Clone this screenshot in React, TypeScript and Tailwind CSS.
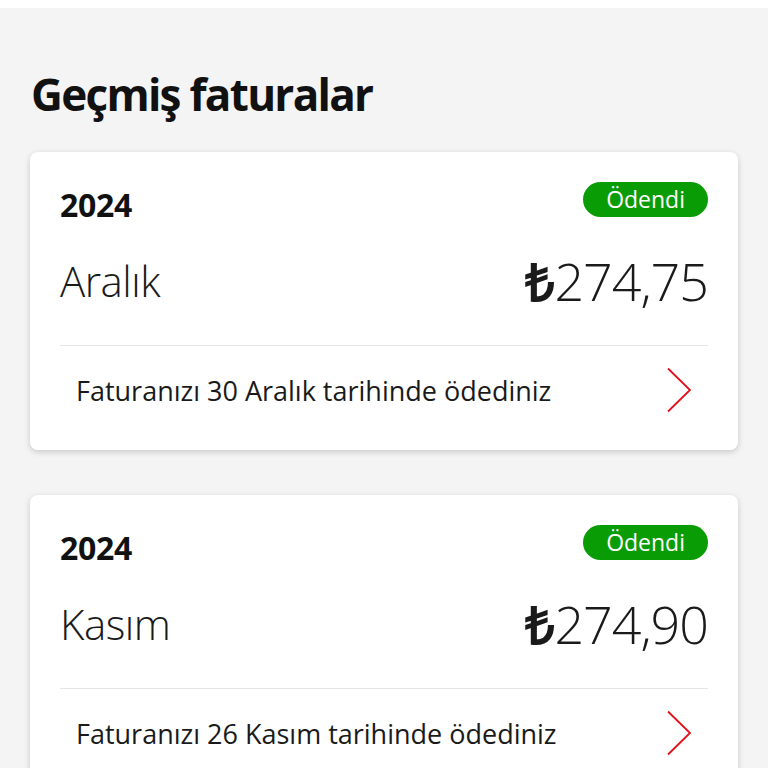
import React from 'react';

const BILLS = [
  { year: '2024', month: 'Aralık', amount: '274,75', note: 'Faturanızı 30 Aralık tarihinde ödediniz' },
  { year: '2024', month: 'Kasım', amount: '274,90', note: 'Faturanızı 26 Kasım tarihinde ödediniz' },
];

function Chevron() {
  return (
    <svg width="26" height="46" viewBox="0 0 26 46" fill="none">
      <path d="M2 1.5 L24 23 L2 44.5" stroke="#e0101a" strokeWidth="1.8" />
    </svg>
  );
}

export default function App() {
  return (
    <div className="min-h-screen bg-[#f4f4f4] font-['Open_Sans',sans-serif] text-[#1a1a1a]">
      <div className="h-2 bg-white" />
      <h1 className="pl-[31px] pt-[61px] text-[44px] font-bold leading-[50px] tracking-[-1.7px] text-[#111]">
        Geçmiş faturalar
      </h1>
      <div className="mt-[33px] flex flex-col gap-[45px] px-[30px]">
        {BILLS.map(bill => (
          <div key={bill.month} className="rounded-lg bg-white px-[30px] pt-[30px] shadow-[0_2px_6px_rgba(0,0,0,0.18)]">
            <div className="flex h-[35px] items-center justify-between">
              <span className="mt-[10px] text-[32px] font-bold leading-none tracking-[-0.3px] text-[#111]">{bill.year}</span>
              <span className="flex h-[35px] items-center rounded-full bg-[#0a9c05] px-[23px] text-[23px] leading-none text-white">
                Ödendi
              </span>
            </div>
            <div className="flex h-[128px] items-center justify-between">
              <span className="text-[42px] font-light leading-none tracking-[-0.5px]">{bill.month}</span>
              <span className="text-[52px] font-light leading-none tracking-[-1px]">
                <span className="font-bold">₺</span>
                {bill.amount}
              </span>
            </div>
            <div className="h-px bg-[#e6e6e6]" />
            <div className="flex h-[104px] items-center justify-between pb-[16px] pl-[16px] pr-[16px]">
              <span className="text-[27px] leading-none">{bill.note}</span>
              <Chevron />
            </div>
          </div>
        ))}
      </div>
    </div>
  );
}
